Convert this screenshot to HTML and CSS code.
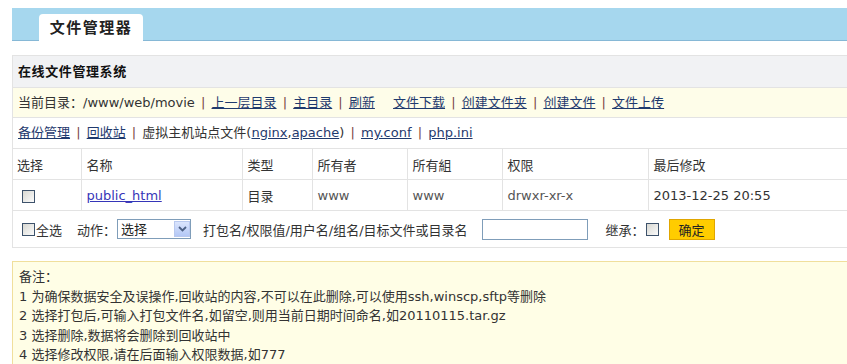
FILE: index.html
```html
<!DOCTYPE html>
<html lang="zh-CN">
<head>
  <meta charset="UTF-8">
  <title>文件管理器</title>
  <link rel="stylesheet" href="styles.css">
</head>
<body>
  <div class="page">
    <div class="topbar">
      <div class="tab">文件管理器</div>
    </div>

    <div class="panel">
      <div class="panel-title">在线文件管理系统</div>

      <div class="row row-path">
        当前目录：/www/web/movie
        <span class="sep">|</span> <a href="#">上一层目录</a>
        <span class="sep">|</span> <a href="#">主目录</a>
        <span class="sep">|</span> <a href="#">刷新</a>
        <a href="#" class="gap">文件下载</a>
        <span class="sep">|</span> <a href="#">创建文件夹</a>
        <span class="sep">|</span> <a href="#">创建文件</a>
        <span class="sep">|</span> <a href="#">文件上传</a>
      </div>

      <div class="row">
        <a href="#">备份管理</a>
        <span class="sep">|</span> <a href="#">回收站</a>
        <span class="sep">|</span> 虚拟主机站点文件(<a href="#">nginx</a>,<a href="#">apache</a>)
        <span class="sep">|</span> <a href="#">my.conf</a>
        <span class="sep">|</span> <a href="#">php.ini</a>
      </div>

      <table class="files">
        <colgroup>
          <col class="c-sel">
          <col class="c-name">
          <col class="c-type">
          <col class="c-owner">
          <col class="c-group">
          <col class="c-perm">
          <col>
        </colgroup>
        <tr>
          <th>选择</th>
          <th>名称</th>
          <th>类型</th>
          <th>所有者</th>
          <th>所有組</th>
          <th>权限</th>
          <th>最后修改</th>
        </tr>
        <tr>
          <td><input type="checkbox" class="cb"></td>
          <td><a href="#" class="file-link">public_html</a></td>
          <td>目录</td>
          <td class="muted">www</td>
          <td class="muted">www</td>
          <td class="muted">drwxr-xr-x</td>
          <td>2013-12-25 20:55</td>
        </tr>
      </table>

      <div class="actions">
        <label class="all"><input type="checkbox" class="cb">全选</label>
        <span class="label-action">动作：</span>
        <span class="select-box">
          <select><option>选择</option></select>
          <span class="select-arrow">
            <svg width="9" height="6" viewBox="0 0 9 6"><path d="M1 1 L4.5 4.5 L8 1" fill="none" stroke="#4d6185" stroke-width="1.8"/></svg>
          </span>
        </span>
        <span class="hint">打包名/权限值/用户名/组名/目标文件或目录名</span>
        <input type="text" class="target">
        <span class="label-inherit">继承：</span>
        <input type="checkbox" class="cb">
        <button class="btn-ok">确定</button>
      </div>
    </div>

    <div class="notes">
      <p>备注：</p>
      <p>1 为确保数据安全及误操作,回收站的内容,不可以在此删除,可以使用ssh,winscp,sftp等删除</p>
      <p>2 选择打包后,可输入打包文件名,如留空,则用当前日期时间命名,如20110115.tar.gz</p>
      <p>3 选择删除,数据将会删除到回收站中</p>
      <p>4 选择修改权限,请在后面输入权限数据,如777</p>
    </div>
  </div>
</body>
</html>
```

FILE: styles.css
```css
body {
  margin: 0;
  font-family: "DejaVu Sans", "Noto Sans CJK SC", sans-serif;
  font-size: 13px;
  color: #333;
  background: #fff;
  overflow: hidden;
}

a {
  color: #1f3a6e;
  text-decoration: underline;
}

.page {
  margin: 8px 0 0 12px;
  width: 1000px;
}

.topbar {
  height: 32px;
  background-color: #a6d7ee;
  border-bottom: 1px solid #86b8d6;
  display: flex;
  align-items: flex-end;
}

.tab {
  margin-left: 27px;
  width: 104px;
  height: 27px;
  margin-bottom: -1px;
  background: #fff;
  border-radius: 4px 4px 0 0;
  font-size: 15px;
  font-weight: bold;
  letter-spacing: 1.5px;
  color: #222;
  text-align: center;
  line-height: 28px;
}

.panel {
  margin-top: 14px;
  border: 1px solid #e3e3e3;
}

.panel-title {
  height: 31px;
  line-height: 31px;
  padding-left: 5px;
  background-color: #f1f2f4;
  border-bottom: 1px solid #e3e3e3;
  font-weight: bold;
  letter-spacing: 0.6px;
  color: #111;
}

.row {
  height: 30px;
  line-height: 30px;
  padding-left: 5px;
  border-bottom: 1px solid #e3e3e3;
  white-space: nowrap;
}

.row-path {
  height: 29px;
  line-height: 29px;
  background-color: #fefde9;
}

.sep {
  color: #7a4444;
  margin: 0 2px;
}

.gap {
  margin-left: 14px;
}

.files {
  border-collapse: collapse;
  table-layout: fixed;
  width: 100%;
}

.c-sel { width: 68px; }
.c-name { width: 161px; }
.c-type { width: 70px; }
.c-owner { width: 95px; }
.c-group { width: 95px; }
.c-perm { width: 146px; }

.files th,
.files td {
  height: 30px;
  padding: 0 5px;
  text-align: left;
  font-weight: normal;
  border-bottom: 1px solid #e3e3e3;
  border-left: 1px solid #e3e3e3;
  white-space: nowrap;
}

.files th:first-child,
.files td:first-child {
  border-left: none;
  padding-left: 4px;
}

.file-link {
  color: #3535b8;
}

.muted {
  color: #555;
}

.cb {
  appearance: none;
  -webkit-appearance: none;
  width: 13px;
  height: 13px;
  margin: 0 0 0 5px;
  border: 1px solid #3d526b;
  background: linear-gradient(135deg, #d8d8d2, #fbfbfb);
  vertical-align: middle;
}

.actions {
  height: 36px;
  display: flex;
  align-items: center;
  white-space: nowrap;
}

.all {
  display: flex;
  align-items: center;
  margin-left: 4px;
}

.all .cb {
  margin: 0 1px 0 5px;
}

.label-action {
  margin-left: 15px;
}

.select-box {
  position: relative;
  display: inline-block;
  margin-left: 1px;
}

.select-box select {
  appearance: none;
  -webkit-appearance: none;
  width: 74px;
  height: 20px;
  padding: 0 0 0 3px;
  border: 1px solid #7f9db9;
  border-radius: 0;
  background: #fff;
  font-family: inherit;
  font-size: 13px;
  color: #222;
  display: block;
}

.select-arrow {
  position: absolute;
  right: 1px;
  top: 1px;
  width: 16px;
  height: 16px;
  border: 1px solid #b9c9ef;
  box-sizing: border-box;
  background: linear-gradient(#dbe5fd, #b4c8f6);
  display: flex;
  align-items: center;
  justify-content: center;
  margin-top: 1px;
}

.hint {
  margin-left: 12px;
}

.target {
  width: 106px;
  height: 21px;
  box-sizing: border-box;
  margin-left: 14px;
  border: 1px solid #7f9db9;
  padding: 0 3px;
}

.label-inherit {
  margin-left: 18px;
}

.actions > .cb {
  margin-left: 1px;
}

.btn-ok {
  margin-left: 10px;
  width: 46px;
  height: 21px;
  background-color: #ffcc00;
  border: 1px solid #e0a600;
  font-family: inherit;
  font-size: 13px;
  color: #222;
  padding: 0;
}

.notes {
  margin-top: 13px;
  padding: 5px 6px;
  min-height: 120px;
  background-color: #fffee6;
  border: 1px solid #f0df9c;
}

.notes p {
  margin: 0;
  line-height: 19.6px;
  white-space: nowrap;
}
```
